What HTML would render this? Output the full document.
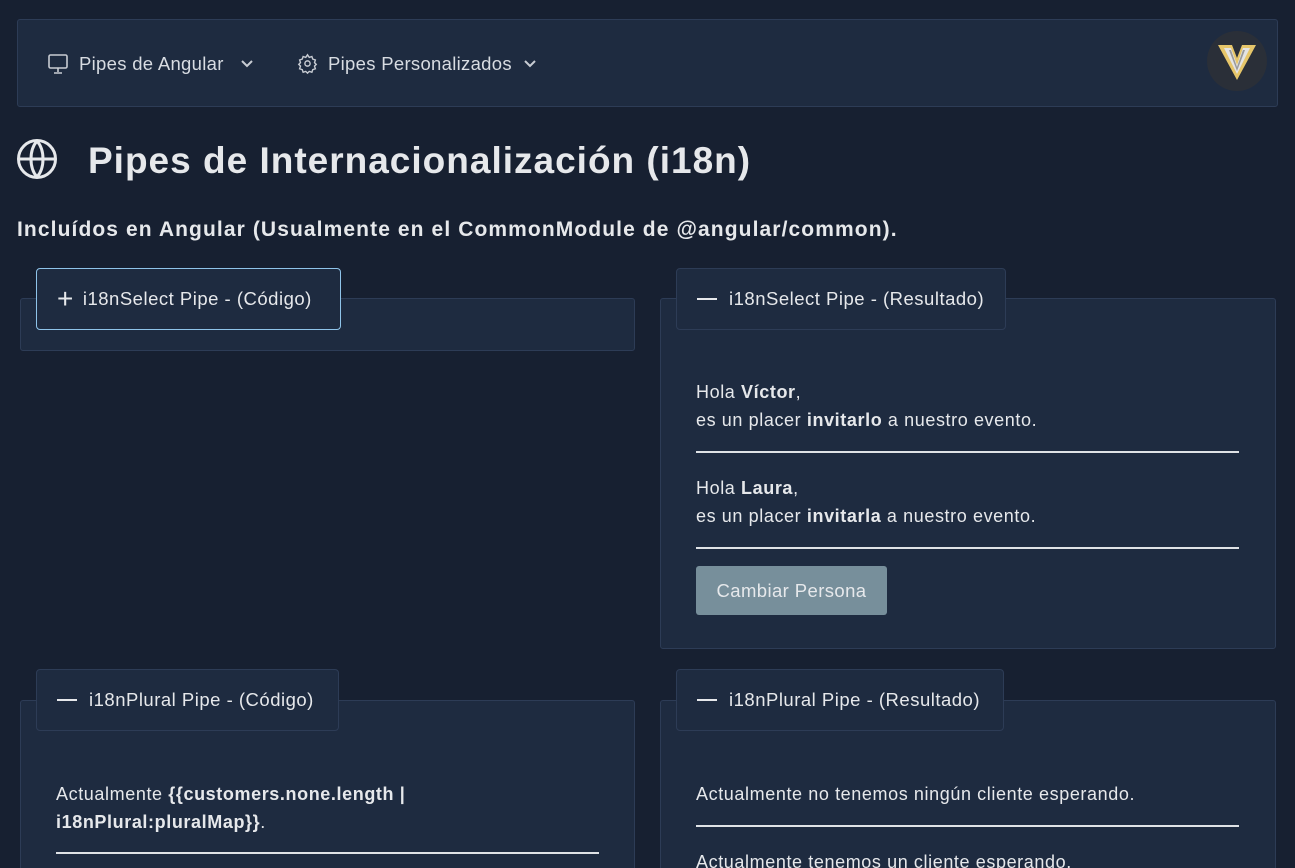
<!DOCTYPE html>
<html><head><meta charset="utf-8"><style>
*{box-sizing:border-box;margin:0;padding:0}
html,body{width:1295px;height:868px;overflow:hidden}
body{background:#172031;font-family:"Liberation Sans",sans-serif;color:#e6e8eb;position:relative}
.a{position:absolute}
.nav{left:17px;top:19px;width:1261px;height:88px;background:#1e2b40;border:1px solid #2d3c56;border-radius:3px}
.navi{font-size:18.5px;top:53px;color:#d8dce2;letter-spacing:0.3px}
.panel{background:#1e2b40;border:1px solid #2d3c56;border-radius:3px}
.tab{background:#1e2b40;border:1px solid #2d3c56;border-radius:4px;font-size:18.5px;letter-spacing:0.5px;display:flex;align-items:center;padding-left:20px}
.t{font-size:18px;letter-spacing:0.6px;line-height:28px;white-space:nowrap}
.hr{height:2px;background:#dfe2e6}
</style></head><body>
<div class="a nav"></div>
<svg class="a" style="left:47px;top:53px" width="22" height="22" viewBox="0 0 22 22" fill="none" stroke="#c8ccd3" stroke-width="1.6"><rect x="2" y="2" width="18" height="13" rx="1.5"/><path d="M11 15v4M7 20h8"/></svg>
<div class="a navi" style="left:79px">Pipes de Angular</div>
<svg class="a" style="left:240px;top:58px" width="14" height="12" viewBox="0 0 14 12" fill="none" stroke="#c8ccd3" stroke-width="2"><path d="M2 3l5 5 5-5"/></svg>
<svg class="a" style="left:297px;top:53px" width="21" height="21" viewBox="0 0 24 24" fill="none" stroke="#c8ccd3" stroke-width="1.6"><circle cx="12" cy="12" r="3"/><path d="M12 2l2 3 3-1 1 3 3 1-1 3 2 2-2 2 1 3-3 1-1 3-3-1-2 2-2-2-3 1-1-3-3-1 1-3-2-2 2-2-1-3 3-1 1-3 3 1z"/></svg>
<div class="a navi" style="left:328px">Pipes Personalizados</div>
<svg class="a" style="left:523px;top:58px" width="14" height="12" viewBox="0 0 14 12" fill="none" stroke="#c8ccd3" stroke-width="2"><path d="M2 3l5 5 5-5"/></svg>
<svg class="a" style="left:1206px;top:30px" width="62" height="62" viewBox="0 0 62 62"><circle cx="31" cy="31" r="30" fill="#2a2f38"/><path d="M12 15h14l5 13 5-13h14L31 50z" fill="#e6c66a"/><path d="M18 18h7l6 17 6-17h7L31 44z" fill="#e4e4e4"/><path d="M23 20h2l6 17 6-17h2L31 41z" fill="#9a9a9a"/></svg>
<svg class="a" style="left:16px;top:138px" width="42" height="42" viewBox="0 0 42 42" fill="none" stroke="#e6e8eb" stroke-width="3"><circle cx="21" cy="21" r="18.5"/><path d="M3 21h36M21 3c-8 9-8 27 0 36M21 3c8 9 8 27 0 36"/></svg>
<div class="a" style="left:88px;top:140px;font-size:37px;letter-spacing:1px;font-weight:bold">Pipes de Internacionalización (i18n)</div>
<div class="a" style="left:17px;top:218px;font-size:21px;letter-spacing:1.1px;font-weight:bold">Incluídos en Angular (Usualmente en el CommonModule de @angular/common).</div>

<div class="a panel" style="left:20px;top:298px;width:615px;height:53px"></div>
<div class="a tab" style="left:36px;top:268px;width:305px;height:62px;border-color:#8fc4ea"><span style="font-size:28px;margin-right:9px;font-weight:300">+</span>i18nSelect Pipe - (Código)</div>

<div class="a panel" style="left:660px;top:298px;width:616px;height:351px"></div>
<div class="a tab" style="left:676px;top:268px;width:330px;height:62px"><span style="display:inline-block;width:20px;height:2px;background:#e6e8eb;margin-right:12px"></span>i18nSelect Pipe - (Resultado)</div>
<div class="a t" style="left:696px;top:378px">Hola <b>Víctor</b>,<br>es un placer <b>invitarlo</b> a nuestro evento.</div>
<div class="a hr" style="left:696px;top:451px;width:543px"></div>
<div class="a t" style="left:696px;top:474px">Hola <b>Laura</b>,<br>es un placer <b>invitarla</b> a nuestro evento.</div>
<div class="a hr" style="left:696px;top:547px;width:543px"></div>
<div class="a" style="left:696px;top:566px;width:191px;height:49px;background:#778f9b;border-radius:3px;font-size:18.5px;letter-spacing:0.4px;display:flex;align-items:center;justify-content:center">Cambiar Persona</div>

<div class="a panel" style="left:20px;top:700px;width:615px;height:200px"></div>
<div class="a tab" style="left:36px;top:669px;width:303px;height:62px"><span style="display:inline-block;width:20px;height:2px;background:#e6e8eb;margin-right:12px"></span>i18nPlural Pipe - (Código)</div>
<div class="a t" style="left:56px;top:780px">Actualmente <b>{{customers.none.length |</b><br><b>i18nPlural:pluralMap}}</b>.</div>
<div class="a hr" style="left:56px;top:852px;width:543px"></div>

<div class="a panel" style="left:660px;top:700px;width:616px;height:200px"></div>
<div class="a tab" style="left:676px;top:669px;width:328px;height:62px"><span style="display:inline-block;width:20px;height:2px;background:#e6e8eb;margin-right:12px"></span>i18nPlural Pipe - (Resultado)</div>
<div class="a t" style="left:696px;top:780px">Actualmente no tenemos ningún cliente esperando.</div>
<div class="a hr" style="left:696px;top:825px;width:543px"></div>
<div class="a t" style="left:696px;top:848px">Actualmente tenemos un cliente esperando.</div>
</body></html>
